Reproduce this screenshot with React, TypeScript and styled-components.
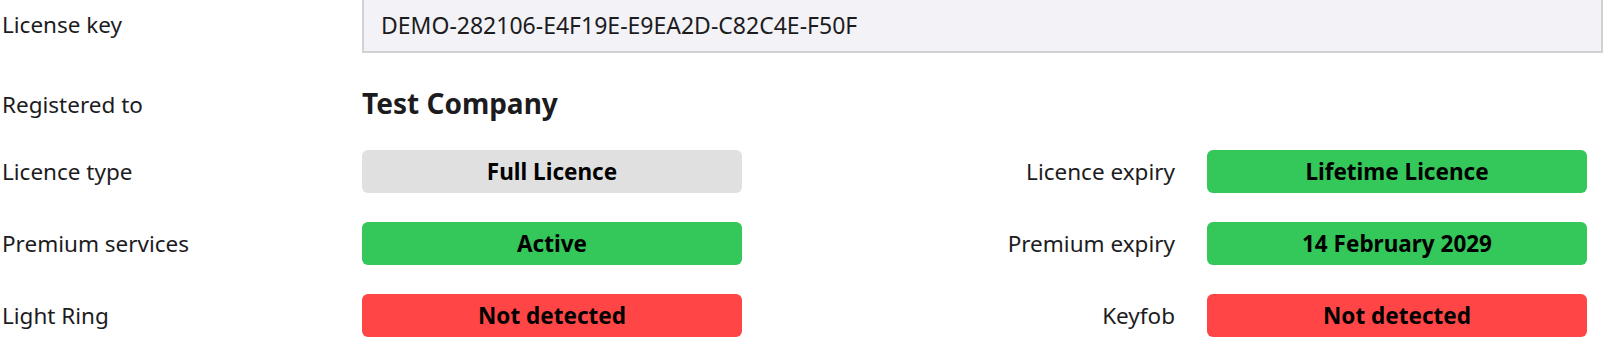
import React from 'react';
import styled, { createGlobalStyle } from 'styled-components';

const colors = {
  text: '#1c1c1e',
  inputBg: '#f2f2f7',
  inputBorder: '#d1d1d6',
  grey: '#e0e0e0',
  green: '#34c759',
  red: '#ff4545',
};

type Tone = 'grey' | 'green' | 'red';

const GlobalStyle = createGlobalStyle`
  html, body {
    margin: 0;
    padding: 0;
    background: #ffffff;
    overflow: hidden;
  }
  body {
    font-family: 'Noto Sans', 'Open Sans', sans-serif;
    color: ${colors.text};
  }
`;

const Panel = styled.div`
  display: grid;
  grid-template-columns: 362px 380px 1fr 380px 16px;
  grid-template-rows: 57px 39px 43px 43px 43px;
  row-gap: 29px;
  align-items: center;
  margin-top: -4px;
  padding-right: 2px;
`;

const Label = styled.div<{ $right?: boolean; $lower?: boolean }>`
  font-size: 22.5px;
  line-height: 1.2;
  padding-left: 2px;
  padding-top: ${({ $lower }) => ($lower ? '5px' : '0')};
  ${({ $right }) => ($right ? 'text-align: right; padding-right: 32px;' : '')}
`;

const KeyField = styled.div`
  grid-column: 2 / -1;
  align-self: stretch;
  display: flex;
  align-items: center;
  padding: 1px 17px 0;
  background: ${colors.inputBg};
  border: 2px solid ${colors.inputBorder};
  font-size: 23px;
`;

const Owner = styled.div`
  grid-column: 2 / -1;
  padding-top: 5px;
  font-size: 28px;
  font-weight: 700;
  line-height: 1.2;
`;

const Pill = styled.div<{ $tone: Tone }>`
  align-self: stretch;
  display: flex;
  align-items: center;
  justify-content: center;
  border-radius: 6px;
  background: ${({ $tone }) => colors[$tone]};
  color: #000;
  font-size: 22.5px;
  font-weight: 700;
`;

const Spacer = styled.div``;

export default function App() {
  return (
    <>
      <GlobalStyle />
      <Panel>
        <Label>License key</Label>
        <KeyField>DEMO-282106-E4F19E-E9EA2D-C82C4E-F50F</KeyField>

        <Label $lower>Registered to</Label>
        <Owner>Test Company</Owner>

        <Label>Licence type</Label>
        <Pill $tone="grey">Full Licence</Pill>
        <Label $right>Licence expiry</Label>
        <Pill $tone="green">Lifetime Licence</Pill>
        <Spacer />

        <Label>Premium services</Label>
        <Pill $tone="green">Active</Pill>
        <Label $right>Premium expiry</Label>
        <Pill $tone="green">14 February 2029</Pill>
        <Spacer />

        <Label>Light Ring</Label>
        <Pill $tone="red">Not detected</Pill>
        <Label $right>Keyfob</Label>
        <Pill $tone="red">Not detected</Pill>
        <Spacer />
      </Panel>
    </>
  );
}
